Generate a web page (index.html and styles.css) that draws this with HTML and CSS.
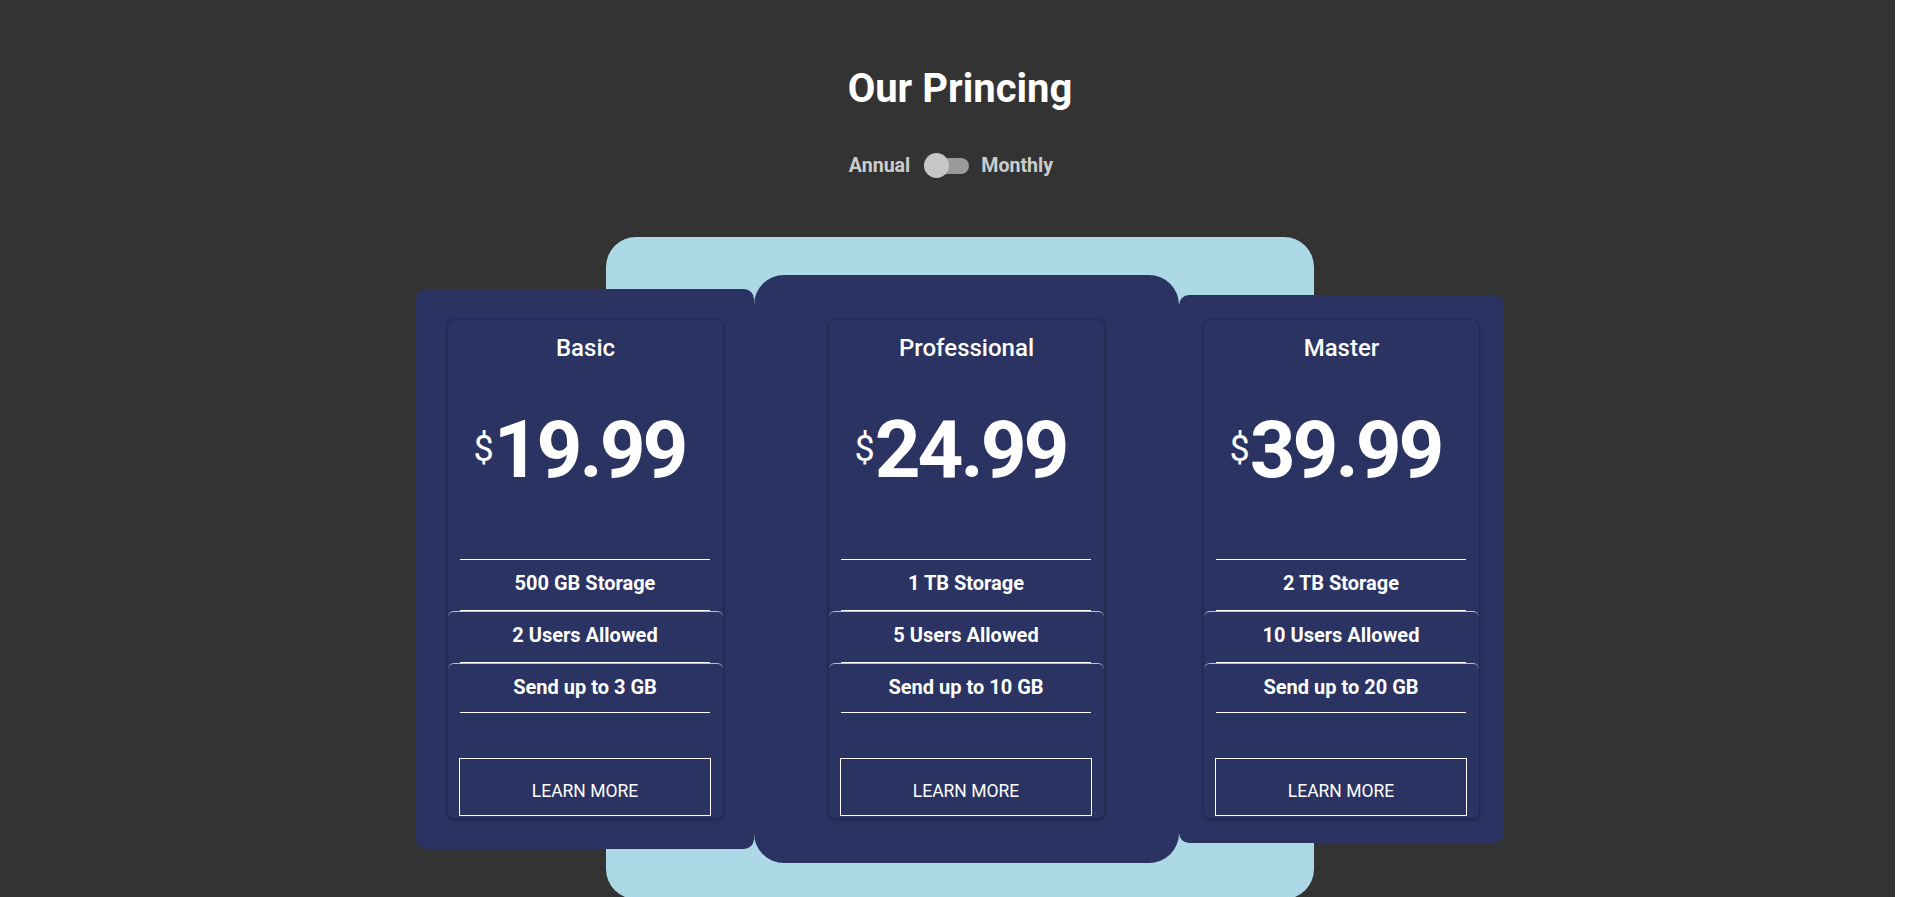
FILE: index.html
```html
<!DOCTYPE html>
<html lang="en">
<head>
<meta charset="utf-8">
<title>Our Princing</title>
<link rel="stylesheet" href="styles.css">
</head>
<body>
<main class="page">
  <h1 class="heading">Our Princing</h1>
  <div class="toggle">
    <span class="toggle-label">Annual</span>
    <span class="switch"><span class="knob"></span></span>
    <span class="toggle-label">Monthly</span>
  </div>
  <section class="stage">
    <div class="backdrop"></div>
    <div class="cards">
      <article class="card card-basic">
        <div class="plan">
          <h2 class="plan-name">Basic</h2>
          <div class="price"><span class="currency">$</span>19.99</div>
          <ul class="features">
            <li class="feature"><span class="feature-label">500 GB Storage</span></li>
            <li class="feature"><span class="feature-label">2 Users Allowed</span></li>
            <li class="feature"><span class="feature-label">Send up to 3 GB</span></li>
          </ul>
          <a class="btn" href="#">LEARN MORE</a>
        </div>
      </article>
      <article class="card card-pro">
        <div class="plan">
          <h2 class="plan-name">Professional</h2>
          <div class="price"><span class="currency">$</span>24.99</div>
          <ul class="features">
            <li class="feature"><span class="feature-label">1 TB Storage</span></li>
            <li class="feature"><span class="feature-label">5 Users Allowed</span></li>
            <li class="feature"><span class="feature-label">Send up to 10 GB</span></li>
          </ul>
          <a class="btn" href="#">LEARN MORE</a>
        </div>
      </article>
      <article class="card card-master">
        <div class="plan">
          <h2 class="plan-name">Master</h2>
          <div class="price"><span class="currency">$</span>39.99</div>
          <ul class="features">
            <li class="feature"><span class="feature-label">2 TB Storage</span></li>
            <li class="feature"><span class="feature-label">10 Users Allowed</span></li>
            <li class="feature"><span class="feature-label">Send up to 20 GB</span></li>
          </ul>
          <a class="btn" href="#">LEARN MORE</a>
        </div>
      </article>
    </div>
  </section>
</main>
</body>
</html>
```

FILE: styles.css
```css
html, body {
  margin: 0;
  padding: 0;
  overflow: hidden;
  background: #ffffff;
  font-family: Roboto, "Liberation Sans", Arial, sans-serif;
}

.page {
  box-sizing: border-box;
  width: calc(100% - 19px);
  height: 897px;
  overflow: hidden;
  background: #333333;
  padding-left: 25px;
  display: flex;
  flex-direction: column;
  align-items: center;
}

.heading {
  margin: 65px 0 0;
  font-size: 40px;
  line-height: 47px;
  font-weight: 700;
  color: #ffffff;
}

.toggle {
  margin: 42px 18px 0 0;
  display: flex;
  align-items: center;
  height: 26px;
}

.toggle-label {
  font-size: 19.6px;
  font-weight: 700;
  color: #cdcdcd;
  line-height: 23px;
}

.switch {
  position: relative;
  width: 45px;
  height: 16px;
  margin: 0 12px 0 14px;
  border-radius: 8px;
  background: #9a9a9a;
}

.knob {
  position: absolute;
  left: 0;
  top: -5px;
  width: 25px;
  height: 25px;
  border-radius: 50%;
  background: #c6c6c6;
}

.stage {
  position: relative;
  margin-top: 60px;
  width: 708px;
  height: 663px;
  flex: none;
  display: flex;
  justify-content: center;
  align-items: center;
}

.backdrop {
  position: absolute;
  left: 0;
  top: 0;
  width: 708px;
  height: 662px;
  border-radius: 30px;
  background: #add8e6;
}

.cards {
  position: relative;
  display: flex;
  align-items: center;
  flex: none;
}

.card {
  background: #2a3361;
  flex: none;
}

.card-basic {
  padding: 31px 31px 31px 32px;
  border-radius: 10px;
}

.card-pro {
  padding: 45px 75px;
  border-radius: 30px;
}

.card-master {
  padding: 25px 25px 25px 25px;
  border-radius: 10px;
}

.plan {
  box-sizing: border-box;
  width: 275px;
  padding: 14px 0 2px;
  border-radius: 6px;
  background: #2a3361;
  box-shadow: 0 0 0 1px rgba(20, 26, 60, 0.25), 0 2px 4px rgba(0, 0, 0, 0.25);
  display: flex;
  flex-direction: column;
  align-items: stretch;
  color: #ffffff;
  text-align: center;
}

.plan-name {
  margin: 0;
  font-size: 24px;
  line-height: 28px;
  font-weight: 500;
}

.price {
  margin-top: 40px;
  padding-right: 12px;
  font-size: 80px;
  line-height: 94px;
  font-weight: 700;
  letter-spacing: -3px;
}

.currency {
  font-size: 36px;
  font-weight: 400;
  vertical-align: 16px;
  letter-spacing: 0;
}

.features {
  list-style: none;
  margin: 62px 0 0;
  padding: 0;
}

.features::before {
  content: "";
  display: block;
  height: 1px;
  margin: 0 13px 0 12px;
  background: #ffffff;
}

.feature {
  display: block;
}

.feature + .feature {
  border-top: 1px solid rgba(255, 255, 255, 0.7);
  border-radius: 6px 6px 0 0;
}

.feature-label {
  display: block;
  box-sizing: border-box;
  margin: 0 13px 0 12px;
  height: 51px;
  padding-bottom: 4px;
  line-height: 46px;
  border-bottom: 1px solid #ffffff;
  font-size: 20px;
  font-weight: 700;
}

.feature:last-child .feature-label {
  height: 49px;
  padding-bottom: 3px;
}

.btn {
  display: block;
  margin: 45px 12px 0 11px;
  padding: 22px 0 13px;
  line-height: 21px;
  border: 1px solid #ffffff;
  font-size: 17.5px;
  font-weight: 400;
  color: #ffffff;
  text-decoration: none;
}
```
